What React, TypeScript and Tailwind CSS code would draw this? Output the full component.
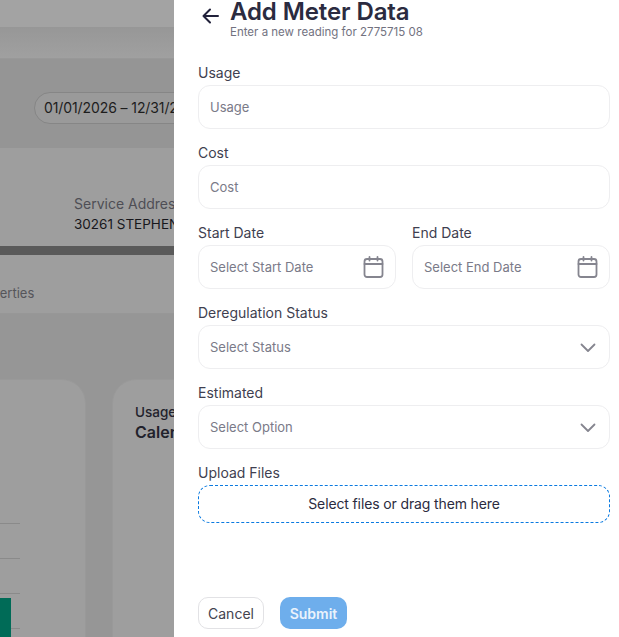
import React from "react";

const Calendar = () => (
  <svg width="21" height="22" viewBox="0 0 21 22" fill="none" stroke="#85858f" strokeWidth="1.8" strokeLinecap="round" strokeLinejoin="round">
    <rect x="1.5" y="3" width="18" height="18" rx="2.5" />
    <path d="M1.5 8h18M6.5 1v3.5M14.5 1v3.5" />
  </svg>
);

const Chevron = () => (
  <svg className="mr-[2px] mt-[1px]" width="16" height="10" viewBox="0 0 16 10" fill="none" stroke="#85858f" strokeWidth="1.8" strokeLinecap="round" strokeLinejoin="round">
    <path d="M1.5 1.5L8 8l6.5-6.5" />
  </svg>
);

const Field = ({ label, placeholder, icon }: { label: string; placeholder: string; icon?: React.ReactNode }) => (
  <div className="flex flex-col gap-[2px] min-w-0">
    <div className="h-5 text-[14px] leading-5 text-[#3f3f50]">{label}</div>
    <div className="h-11 rounded-[12px] border border-[#eeeef0] bg-white pl-[11px] pr-[11px] flex items-center justify-between">
      <span className="pt-[2px] text-[13px] text-[#7a7a88]">{placeholder}</span>
      {icon}
    </div>
  </div>
);

export default function App() {
  return (
    <div className="relative w-[619px] h-[637px] overflow-hidden bg-[#969696] text-[14px]" style={{ fontFamily: "Inter, sans-serif" }}>
      <div className="h-[27px] bg-[#a3a3a3]" />
      <div className="h-[32px] bg-gradient-to-b from-[#979797] to-[#a0a0a0] border-b border-[#989898]" />
      <div className="h-[89px] bg-[#959595] flex items-center pl-[34px] pt-[8px]">
        <div className="h-8 w-[200px] shrink-0 rounded-full border border-[#868686] bg-[#9a9a9a] pl-[9px] flex items-center text-[14px] tracking-[-0.1px] text-[#1d1d1d] whitespace-nowrap">
          01/01/2026 – 12/31/2026
        </div>
      </div>
      <div className="h-[98px] bg-[#9e9e9e] pl-[74px] pt-[46px] leading-[20px] whitespace-nowrap">
        <div className="text-[#4e4e55]">Service Address</div>
        <div className="text-[#17171c] text-[13.5px]">30261 STEPHENS</div>
      </div>
      <div className="h-[9px] bg-[#5a5a5a]" />
      <div className="h-[59px] bg-[#9e9e9e] border-b border-[#979797] pt-[28px] leading-[20px] text-[13px] text-[#55555a]">
        <div className="-ml-[29px]">Properties</div>
      </div>
      <div className="flex gap-[26px] pt-[65px] -ml-[40px]">
        <div className="relative h-[300px] w-[126px] shrink-0 rounded-[24px] border border-[#999999] bg-[#9e9e9e]">
          <div className="flex flex-col pt-[143px] gap-[34px]">
            <div className="h-px w-[59px] bg-[#8a8a8a]" />
            <div className="h-px w-[59px] bg-[#8a8a8a]" />
            <div className="h-px w-[59px] bg-[#8a8a8a]" />
            <div className="h-px w-[59px] bg-[#8a8a8a]" />
          </div>
          <div className="absolute left-0 top-[218px] h-[80px] w-[50px] bg-[#006b57]" />
        </div>
        <div className="h-[300px] w-[200px] shrink-0 rounded-[24px] border border-[#999999] bg-[#9e9e9e] pl-[22px] pt-[23px] text-[#22222c]">
          <div className="text-[13.5px] leading-[18px] font-medium">Usage</div>
          <div className="text-[16px] leading-[22px] font-semibold">Calendar</div>
        </div>
      </div>

      <div className="absolute top-0 bottom-0 left-[174px] right-0 bg-white pl-6 pr-[9px] flex flex-col">
        <div className="h-10 flex items-start">
          <svg className="mt-[8px] ml-[4px] mr-[11px] shrink-0" width="17" height="16" viewBox="0 0 17 16" fill="none" stroke="#22223b" strokeWidth="2" strokeLinecap="round" strokeLinejoin="round">
            <path d="M16 8H1.5M8 1.5L1.5 8 8 14.5" />
          </svg>
          <div className="ml-[-1px] pl-[1px]">
            <div className="text-[24px] leading-[24px] font-semibold tracking-[-0.1px] text-[#2b2b40]">Add Meter Data</div>
            <div className="text-[11.5px] leading-[14px] mt-[1px] text-[#72727f]">Enter a new reading for 2775715 08</div>
          </div>
        </div>
        <div className="flex flex-col gap-[14px] mt-[23px]">
          <Field label="Usage" placeholder="Usage" />
          <Field label="Cost" placeholder="Cost" />
          <div className="grid grid-cols-[198px_198px] gap-x-4">
            <Field label="Start Date" placeholder="Select Start Date" icon={<Calendar />} />
            <Field label="End Date" placeholder="Select End Date" icon={<Calendar />} />
          </div>
          <Field label="Deregulation Status" placeholder="Select Status" icon={<Chevron />} />
          <Field label="Estimated" placeholder="Select Option" icon={<Chevron />} />
          <div className="flex flex-col gap-[2px]">
            <div className="h-5 text-[14px] leading-5 text-[#3f3f50]">Upload Files</div>
            <div className="h-[38px] rounded-[12px] border border-dashed border-[#0a7ae0] flex items-center justify-center pb-[2px] text-[14px] tracking-[-0.13px] text-[#2b2b40]">
              Select files or drag them here
            </div>
          </div>
        </div>
        <div className="flex gap-4 mt-[74px]">
          <button className="h-8 w-[66px] rounded-[10px] border border-[#e2e2e5] bg-white text-[14px] text-[#43434f]">Cancel</button>
          <button className="h-8 w-[67px] rounded-[10px] bg-[#6eaeec] text-[14px] font-semibold text-[#eaf3fc]">Submit</button>
        </div>
      </div>
    </div>
  );
}
